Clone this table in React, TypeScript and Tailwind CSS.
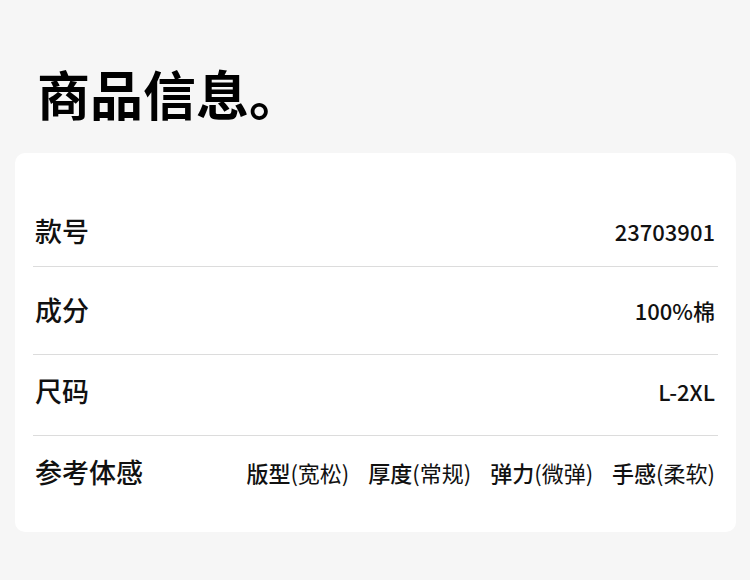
const font = { fontFamily: '"Noto Sans CJK SC", "Noto Sans", sans-serif' };

const rows = [
  { label: "款号", value: "23703901", h: "h-[70px]" },
  { label: "成分", value: "100%棉", h: "h-[88px]" },
  { label: "尺码", value: "L-2XL", h: "h-[81px] pb-[7px]" },
];

const feels = [
  ["版型", "宽松"],
  ["厚度", "常规"],
  ["弹力", "微弹"],
  ["手感", "柔软"],
];

export default function App() {
  return (
    <div className="w-[750px] h-[580px] bg-[#f6f6f6] overflow-hidden" style={font}>
      <h1 className="pt-[67px] pl-[37px] text-[53px] leading-[52px] font-bold text-black">商品信息。</h1>
      <div className="mt-[34px] mx-[15px] w-[721px] bg-white rounded-[10px] pt-[44px] pb-[24px] px-[18px]">
        {rows.map((r) => (
          <div key={r.label} className={`flex items-center justify-between border-b border-[#dcdcdc] ${r.h}`}>
            <span className="pl-[2px] text-[27px] font-medium text-[#111]">{r.label}</span>
            <span className="pr-[3px] text-[22px] font-medium text-[#111]">{r.value}</span>
          </div>
        ))}
        <div className="flex items-center justify-between h-[72px]">
          <span className="pl-[2px] text-[27px] font-medium text-[#111]">参考体感</span>
          <div className="flex gap-[19px] pr-[3px] text-[22px] text-[#111]">
            {feels.map(([a, b]) => (
              <span key={a}>
                <span className="font-medium">{a}</span>
                <span className="font-normal">({b})</span>
              </span>
            ))}
          </div>
        </div>
      </div>
    </div>
  );
}
